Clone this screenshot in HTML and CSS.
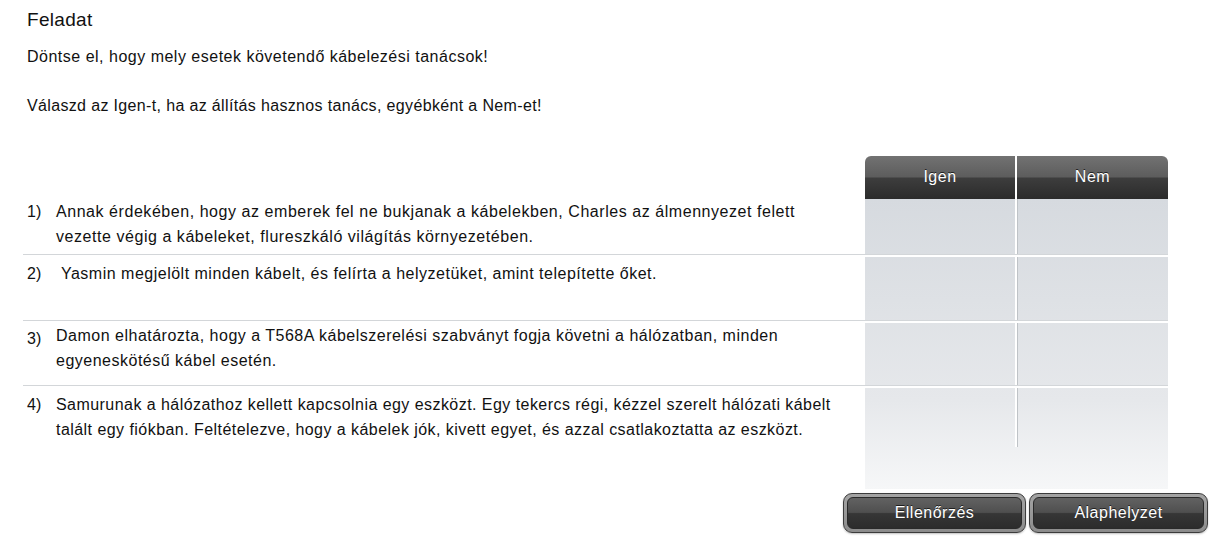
FILE: index.html
```html
<!DOCTYPE html>
<html lang="hu">
<head>
<meta charset="utf-8">
<title>Feladat</title>
<link rel="stylesheet" href="styles.css">
</head>
<body>
<div class="task">
  <h1 class="title">Feladat</h1>
  <p class="intro">Döntse el, hogy mely esetek követendő kábelezési tanácsok!</p>
  <p class="instr">Válaszd az Igen-t, ha az állítás hasznos tanács, egyébként a Nem-et!</p>
</div>

<div class="quiz">
  <div class="row head">
    <div class="text"></div>
    <div class="col-head first">Igen</div>
    <div class="col-head last">Nem</div>
  </div>

  <div class="row r1">
    <div class="text pad0"><span class="num">1)</span><span class="stmt">Annak érdekében, hogy az emberek fel ne bukjanak a kábelekben, Charles az álmennyezet felett<br>vezette végig a kábeleket, flureszkáló világítás környezetében.</span></div>
    <div class="cell"></div>
    <div class="cell nem"></div>
  </div>

  <div class="row r2">
    <div class="text pad4"><span class="num">2)</span><span class="stmt">&nbsp;Yasmin megjelölt minden kábelt, és felírta a helyzetüket, amint telepítette őket.</span></div>
    <div class="cell"></div>
    <div class="cell nem"></div>
  </div>

  <div class="row r3">
    <div class="text pad0"><span class="num low">3)</span><span class="stmt">Damon elhatározta, hogy a T568A kábelszerelési szabványt fogja követni a hálózatban, minden<br>egyeneskötésű kábel esetén.</span></div>
    <div class="cell"></div>
    <div class="cell nem"></div>
  </div>

  <div class="row r4">
    <div class="text pad4"><span class="num">4)</span><span class="stmt">Samurunak a hálózathoz kellett kapcsolnia egy eszközt. Egy tekercs régi, kézzel szerelt hálózati kábelt<br>talált egy fiókban. Feltételezve, hogy a kábelek jók, kivett egyet, és azzal csatlakoztatta az eszközt.</span></div>
    <div class="cell"></div>
    <div class="cell nem"></div>
  </div>

  <div class="row tail">
    <div class="text"></div>
    <div class="filler"></div>
  </div>
</div>

<div class="actions">
  <button class="btn" type="button"><span class="btn-face">Ellenőrzés</span></button>
  <button class="btn narrow" type="button"><span class="btn-face">Alaphelyzet</span></button>
</div>
</body>
</html>
```

FILE: styles.css
```css
html, body {
  margin: 0;
  padding: 0;
  background: #ffffff;
}

body {
  font-family: "Liberation Sans", Arial, sans-serif;
  color: #111111;
  width: 1216px;
  height: 555px;
  overflow: hidden;
}

.task {
  padding: 10px 0 0 27px;
}

.title {
  margin: 0;
  font-size: 19px;
  letter-spacing: 0.3px;
  line-height: 20px;
  font-weight: normal;
}

.intro,
.instr {
  font-size: 16px;
  letter-spacing: 0.5px;
  line-height: 20px;
}

.intro {
  margin: 17px 0 0;
}

.instr {
  margin: 29px 0 0;
  letter-spacing: 0.35px;
}

.quiz {
  margin: 40px 0 0 23px;
  width: 1145px;
}

.row {
  display: grid;
  grid-template-columns: 840px 150px 151px;
  column-gap: 2px;
}

.row.r1, .row.r2, .row.r3 {
  border-bottom: 1px solid #d3d6d9;
  margin-bottom: 2px;
}

.row.head { height: 43px; }
.row.r1 { height: 55px; }
.row.r2 { height: 63px; }
.row.r3 { height: 62px; }
.row.r4 { height: 59px; }
.row.tail { height: 42px; }

.text {
  display: flex;
  padding-left: 4px;
  font-size: 16px;
  letter-spacing: 0.5px;
  line-height: 25px;
}

.text.pad0 { padding-top: 0; }
.text.pad4 { padding-top: 4px; }

.num {
  width: 29px;
  flex: none;
  letter-spacing: 0;
}

.num.low {
  padding-top: 3px;
}

.stmt {
  white-space: nowrap;
}

.r1 .stmt { letter-spacing: 0.55px; }
.r4 .stmt { letter-spacing: 0.45px; }

.col-head {
  background: linear-gradient(to bottom, #727272 0%, #5d5d5d 48%, #3d3d3d 52%, #2b2b2b 100%);
  color: #ffffff;
  font-size: 16px;
  letter-spacing: 0.5px;
  line-height: 20px;
  text-align: center;
  padding-top: 11px;
  box-sizing: border-box;
  text-shadow: 0 -1px 0 #222222;
}

.col-head.first { border-top-left-radius: 6px; }
.col-head.last { border-top-right-radius: 6px; }

.cell,
.filler {
  background: linear-gradient(to bottom, #d6dadf 199px, #e6e8eb 400px, #f6f7f8 490px) fixed;
}

.cell.nem {
  border-left: 1px solid #bfc3c7;
}

.filler {
  grid-column: 2 / 4;
}

.actions {
  display: flex;
  justify-content: flex-end;
  gap: 3px;
  padding: 4px 8px 0 0;
}

.btn {
  width: 183px;
  height: 40px;
  padding: 3px;
  margin: 0;
  border: 1px solid #3c3c3c;
  border-radius: 9px;
  background: linear-gradient(to bottom, #a4a4a4 0%, #8c8c8c 100%);
  box-shadow: 0 1px 2px rgba(0, 0, 0, 0.25);
  font-family: "Liberation Sans", Arial, sans-serif;
  cursor: pointer;
}

.btn.narrow {
  width: 179px;
}

.btn-face {
  display: block;
  height: 100%;
  box-sizing: border-box;
  border: 1px solid #2a2a2a;
  border-radius: 6px;
  background: linear-gradient(to bottom, #626262 0%, #4f4f4f 48%, #363636 52%, #2c2c2c 100%);
  color: #ffffff;
  font-size: 16px;
  letter-spacing: 0.5px;
  line-height: 30px;
  text-align: center;
  text-shadow: 0 -1px 0 #1e1e1e;
}
```
